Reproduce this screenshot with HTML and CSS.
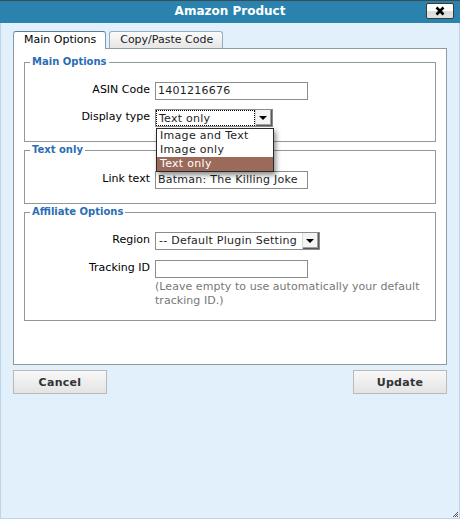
FILE: index.html
```html
<!DOCTYPE html>
<html>
<head>
<meta charset="utf-8">
<link rel="stylesheet" href="styles.css">
</head>
<body>
<div class="win">
  <div class="titlebar">
    <span class="title">Amazon Product</span>
    <button class="close" type="button"><svg width="10" height="10" viewBox="0 0 10 10"><path d="M1.5 1.5 L8.5 8.5 M8.5 1.5 L1.5 8.5" stroke="#000" stroke-width="2.6" stroke-linecap="butt"/></svg></button>
  </div>
  <div class="body">
    <div class="tabs">
      <div class="tab active">Main Options</div>
      <div class="tab">Copy/Paste Code</div>
    </div>
    <div class="panel">
      <fieldset class="fs fs-main">
        <legend>Main Options</legend>
        <div class="grid">
          <label class="lbl">ASIN Code</label>
          <div class="input w153">1401216676</div>
          <label class="lbl">Display type</label>
          <div class="select-wrap">
            <div class="select w118"><span class="val focus">Text only</span><span class="arrow"><span class="tri"></span></span></div>
            <ul class="dropdown">
              <li>Image and Text</li>
              <li>Image only</li>
              <li class="sel">Text only</li>
            </ul>
          </div>
        </div>
      </fieldset>
      <fieldset class="fs fs-text">
        <legend>Text only</legend>
        <div class="grid">
          <label class="lbl">Link text</label>
          <div class="input w153">Batman: The Killing Joke</div>
        </div>
      </fieldset>
      <fieldset class="fs fs-aff">
        <legend>Affiliate Options</legend>
        <div class="grid grid-aff">
          <label class="lbl">Region</label>
          <div class="select w165"><span class="val">-- Default Plugin Setting</span><span class="arrow"><span class="tri"></span></span></div>
          <label class="lbl">Tracking ID</label>
          <div class="cell">
            <div class="input w153"></div>
            <p class="help">(Leave empty to use automatically your default tracking ID.)</p>
          </div>
        </div>
      </fieldset>
    </div>
    <div class="buttons">
      <button class="btn" type="button">Cancel</button>
      <button class="btn" type="button">Update</button>
    </div>
    <div class="grip"><svg width="7" height="7" viewBox="0 0 7 7"><path d="M6 1 L1 6 M6 3 L3 6 M6 5 L5 6" stroke="#555" stroke-width="1"/></svg></div>
  </div>
</div>
</body>
</html>
```

FILE: styles.css
```css
* { box-sizing: border-box; }
html, body { margin: 0; padding: 0; }
body {
  font-family: "DejaVu Sans", Verdana, sans-serif;
  font-size: 11px;
  color: #000;
  background: #e2f0fc;
}
.win {
  width: 460px;
  height: 519px;
  display: flex;
  flex-direction: column;
}
.titlebar {
  height: 23px;
  border-top: 1px solid #3f4a50;
  background: #2983ae;
  display: grid;
  grid-template-columns: 1fr auto 1fr;
  align-items: start;
  padding-top: 2px;
}
.title {
  grid-column: 2;
  color: #fff;
  font-weight: bold;
  font-size: 12px;
  line-height: 17px;
}
.close {
  grid-column: 3;
  justify-self: end;
  margin-right: 6px;
  width: 28px;
  height: 16px;
  padding: 0;
  border: 1px solid #3a3a3a;
  border-radius: 2px;
  background: linear-gradient(#ffffff 0, #ffffff 50%, #dcdcdc 50%, #e2e2e2 100%);
  display: flex;
  align-items: center;
  justify-content: center;
}
.close svg { display: block; }
.body {
  flex: 1;
  border: 1px solid #bcd5ea;
  border-top: 0;
  padding: 8px 12px 0 12px;
  display: flex;
  flex-direction: column;
}
.tabs {
  display: flex;
  gap: 3px;
  height: 17px;
  position: relative;
  z-index: 1;
}
.tab {
  height: 17px;
  padding: 0 9px 0 10px;
  line-height: 16px;
  border: 1px solid #9aacbd;
  border-bottom: 0;
  border-radius: 3px 3px 0 0;
  background: linear-gradient(#fbfbfb, #e6e6e6);
  color: #1a1a1a;
  white-space: nowrap;
}
.tab.active {
  height: 18px;
  background: #fff;
  border-color: #8599ab;
  border-top-color: #5d7c99;
  color: #000;
}
.panel {
  height: 317px;
  background: #fff;
  border: 1px solid #919b9c;
  padding: 7px 10px 0 10px;
}
.fs {
  margin: 0 0 2px 0;
  padding: 0 0 14px 0;
  border: 1px solid #8e9a9a;
  min-width: 0;
}
.fs legend {
  font-weight: bold;
  font-size: 10px;
  line-height: 12px;
  color: #2b6db5;
  margin-left: 5px;
  padding: 0 2px;
}
.fs-main .grid { padding-top: 14px; row-gap: 9px; }
.fs-text .grid { padding-top: 15px; }
.fs-aff .grid { padding-top: 14px; row-gap: 10px; }
.fs-aff { padding-bottom: 12px; }
.grid {
  display: grid;
  grid-template-columns: 125px auto;
  column-gap: 5px;
  align-items: start;
  justify-items: start;
}
.lbl {
  justify-self: end;
  text-align: right;
  line-height: 16px;
  white-space: nowrap;
}
.input {
  height: 18px;
  border: 1px solid #8c8c8c;
  background: #fff;
  padding: 0 2px;
  line-height: 16px;
  white-space: nowrap;
  overflow: hidden;
  color: #1e1e1e;
  letter-spacing: 0.25px;
}
.w153 { width: 153px; }
.w118 { width: 118px; }
.w165 { width: 165px; }
.select-wrap { position: relative; }
.select {
  height: 18px;
  border: 1px solid #8c8c8c;
  background: #fff;
  display: flex;
  white-space: nowrap;
}
.select .val {
  flex: 1;
  padding: 0 3px;
  line-height: 16px;
  overflow: hidden;
  color: #1e1e1e;
  letter-spacing: 0.25px;
}
.select .val.focus {
  outline: 1px dotted #000;
  outline-offset: -1px;
  line-height: 17px;
}
.arrow {
  width: 17px;
  background: #f4f4f4;
  border-left: 1px solid #d8d8d8;
  box-shadow: inset -1px -1px 0 #5a5a5a, inset -2px -2px 0 #a0a0a0;
  display: flex;
  align-items: center;
  justify-content: center;
  padding-right: 2px;
}
.tri {
  width: 0;
  height: 0;
  border-left: 4px solid transparent;
  border-right: 4px solid transparent;
  border-top: 4px solid #000;
}
.dropdown {
  position: absolute;
  top: 19px;
  left: 1px;
  width: 118px;
  margin: 0;
  padding: 0;
  list-style: none;
  background: #fff;
  border: 1px solid #2a2a2a;
  box-shadow: 2px 3px 5px rgba(0, 0, 0, 0.45);
  z-index: 5;
}
.dropdown li {
  line-height: 14px;
  height: 14px;
  padding-left: 3px;
  white-space: nowrap;
  letter-spacing: 0.3px;
  color: #1e1e1e;
}
.dropdown li.sel {
  background: #9b6a5a;
  color: #fff;
}
.cell { display: flex; flex-direction: column; }
.help {
  margin: 2px 0 0 0;
  color: #777;
  line-height: 14px;
  max-width: 278px;
  letter-spacing: 0.05px;
}
.buttons {
  margin-top: 5px;
  display: flex;
  justify-content: space-between;
}
.btn {
  width: 94px;
  height: 24px;
  padding: 0;
  border: 1px solid #b9b9b9;
  background: linear-gradient(#f8f8f8, #e4e4e4);
  font-family: "DejaVu Sans", Verdana, sans-serif;
  font-size: 11px;
  font-weight: bold;
  color: #333;
  letter-spacing: 0.3px;
}
.grip {
  margin-top: auto;
  align-self: flex-end;
  margin-right: -12px;
  height: 7px;
  width: 7px;
}
.grip svg { display: block; }
```
